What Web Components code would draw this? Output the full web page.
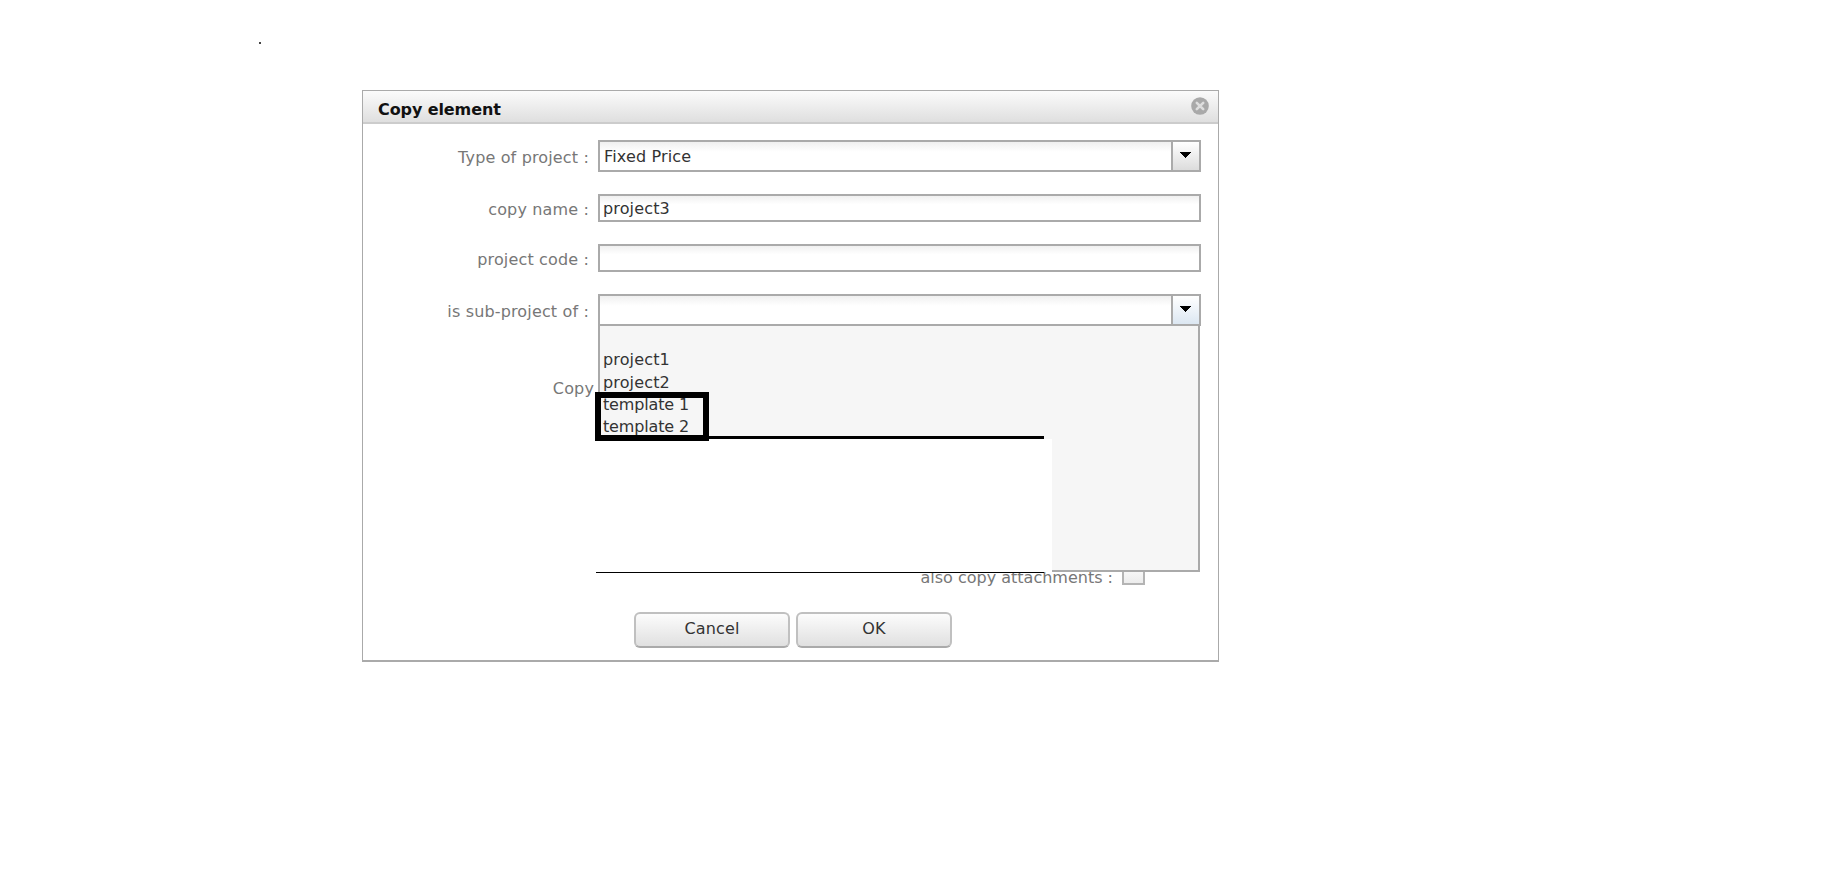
<!DOCTYPE html>
<html>
<head>
<meta charset="utf-8">
<title>Copy element</title>
<style>
  html, body { margin: 0; background: #fff; }
  body { font-family: "DejaVu Sans", Verdana, sans-serif; font-size: 16px; letter-spacing: 0.15px; color: #333; height: 878px; overflow: hidden; }
  .tight { letter-spacing: -0.15px; }
</style>
</head>
<body>
<copy-page>
  <copy-dialog heading="Copy element">
    <form-row label="Type of project :" style="--h:32px;--gap:22px">
      <combo-field value="Fixed Price"></combo-field>
    </form-row>
    <form-row label="copy name :" style="--h:28px;--gap:22px">
      <text-field value="project3"></text-field>
    </form-row>
    <form-row label="project code :" style="--h:28px;--gap:22px">
      <text-field></text-field>
    </form-row>
    <form-row label="is sub-project of :" style="--h:32px;--gap:50px">
      <combo-field open>
        <span>&nbsp;</span>
        <span>project1</span>
        <span>project2</span>
        <span class="tight">template 1</span>
        <span class="tight">template 2</span>
      </combo-field>
    </form-row>
    <form-row label="Copy" style="--h:22px;--gap:168px;--label-w:231px"></form-row>
    <option-row label="also copy attachments :"></option-row>
    <button-bar slot="footer">
      <push-button>Cancel</push-button>
      <push-button>OK</push-button>
    </button-bar>
  </copy-dialog>
</copy-page>

<script>
class CopyPage extends HTMLElement {
  constructor() {
    super();
    this.attachShadow({ mode: 'open' });
    this.shadowRoot.innerHTML = `
    <style>
      :host { display: block; padding: 42px 0 0 259px; }
      .dot { display: block; width: 2px; height: 2px; background: #444; }
      .wrap { margin-top: 46px; margin-left: 103px; }
    </style>
    <span class="dot"></span>
    <div class="wrap"><slot></slot></div>
    `;
  }
}
customElements.define('copy-page', CopyPage);

class CopyDialog extends HTMLElement {
  constructor() {
    super();
    this.attachShadow({ mode: 'open' });
    this.shadowRoot.innerHTML = `
    <style>
      :host {
        display: block;
        box-sizing: border-box;
        width: 857px;
        height: 572px;
        border: 1px solid #aaa;
        border-bottom: 2px solid #aaa;
        background: #fff;
        position: relative;
      }
      header {
        box-sizing: border-box;
        height: 33px;
        display: flex;
        align-items: center;
        justify-content: space-between;
        padding: 0 9px 2px 15px;
        background: linear-gradient(#fbfbfb, #dfdfdf);
        border-bottom: 2px solid #ccc;
      }
      h1 { margin: 0; font-size: 16px; letter-spacing: -0.1px; font-weight: bold; color: #111; position: relative; top: 4px; }
      svg { display: block; margin-top: 1px; }
      main { padding: 16px 0 0 0; }
      footer { margin-top: 24px; }
    </style>
    <header>
      <h1></h1>
      <svg width="18" height="18" viewBox="0 0 18 18">
        <circle cx="9" cy="9" r="8.8" fill="#a9a9a9"/>
        <path d="M5.8 5.8l6.4 6.4M12.2 5.8l-6.4 6.4" stroke="#dedede" stroke-width="2.6" stroke-linecap="round"/>
      </svg>
    </header>
    <main><slot></slot></main>
    <footer><slot name="footer"></slot></footer>
    `;
    this.shadowRoot.querySelector('h1').textContent = this.getAttribute('heading');
  }
}
customElements.define('copy-dialog', CopyDialog);

class FormRow extends HTMLElement {
  constructor() {
    super();
    this.attachShadow({ mode: 'open' });
    this.shadowRoot.innerHTML = `
    <style>
      :host {
        display: grid;
        grid-template-columns: var(--label-w, 226px) 603px;
        column-gap: 9px;
        height: var(--h, 28px);
        margin-bottom: var(--gap, 22px);
        align-items: center;
      }
      label { text-align: right; color: #777; white-space: nowrap; position: relative; top: 1px; }
    </style>
    <label></label>
    <div><slot></slot></div>
    `;
    this.shadowRoot.querySelector('label').textContent = this.getAttribute('label');
  }
}
customElements.define('form-row', FormRow);

class TextField extends HTMLElement {
  constructor() {
    super();
    this.attachShadow({ mode: 'open' });
    this.shadowRoot.innerHTML = `
    <style>
      :host {
        display: block;
        box-sizing: border-box;
        height: 28px;
        border: 2px solid #aaa;
        background: linear-gradient(#f0f0f0, #fff 35%);
        line-height: 26px;
        padding-left: 3px;
      }
    </style>
    <span></span>
    `;
    this.shadowRoot.querySelector('span').textContent = this.getAttribute('value') || '';
  }
}
customElements.define('text-field', TextField);

class ComboField extends HTMLElement {
  constructor() {
    super();
    this.attachShadow({ mode: 'open' });
    const open = this.hasAttribute('open');
    this.shadowRoot.innerHTML = `
    <style>
      :host { display: block; position: relative; height: 32px; }
      .box {
        box-sizing: border-box;
        height: 32px;
        border: 2px solid #aaa;
        display: flex;
        background: linear-gradient(#f0f0f0, #fff 35%);
      }
      .value { flex: 1; line-height: 29px; padding-left: 4px; }
      .arrow {
        width: 28px;
        border-left: 2px solid #aaa;
        background: linear-gradient(#fff, ${open ? '#dce7f2' : '#dcdcdc'});
        display: flex;
        align-items: flex-start;
        justify-content: center;
        padding: 10px 2px 0 0;
        box-sizing: border-box;
      }
      .list {
        position: absolute;
        left: 0;
        top: 32px;
        box-sizing: border-box;
        width: 602px;
        height: 246px;
        padding: 1px 0 0 3px;
        background: #f6f6f6;
        border: 2px solid #aaa;
        border-top: 0;
        display: ${open ? 'block' : 'none'};
      }
      ::slotted(span) { display: block; line-height: 22.3px; height: 22.3px; }
      .mark {
        position: absolute;
        left: -5px;
        top: 66px;
        width: 114px;
        height: 49px;
        box-sizing: border-box;
        border: 6px solid #000;
      }
      .rule { position: absolute; left: 109px; top: 110px; width: 335px; height: 3px; background: #000; }
      .blank { position: absolute; left: -5px; top: 113px; width: 457px; height: 133px; background: #fff; }
      .baseline { position: absolute; left: -4px; top: 246px; width: 448px; height: 1px; background: #000; }
    </style>
    <div class="box">
      <div class="value"></div>
      <div class="arrow">
        <svg width="11" height="6" viewBox="0 0 11 6"><path d="M0 0h11v1h-1v1H9v1H8v1H7v1H6v1H5V5H4V4H3V3H2V2H1V1H0z" fill="#000"/></svg>
      </div>
    </div>
    <div class="list">
      <slot></slot>
      <div class="blank"></div>
      <div class="mark"></div>
      <div class="rule"></div>
      <div class="baseline"></div>
    </div>
    `;
    this.shadowRoot.querySelector('.value').textContent = this.getAttribute('value') || '';
  }
}
customElements.define('combo-field', ComboField);

class OptionRow extends HTMLElement {
  constructor() {
    super();
    this.attachShadow({ mode: 'open' });
    this.shadowRoot.innerHTML = `
    <style>
      :host {
        display: flex;
        justify-content: flex-end;
        align-items: center;
        gap: 9px;
        height: 22px;
        padding-right: 73px;
        color: #777;
        letter-spacing: 0;
      }
      i {
        display: block;
        box-sizing: border-box;
        width: 23px;
        height: 16px;
        border: 2px solid #b4b4b4;
        background: linear-gradient(#f8f8f8, #ececec);
      }
    </style>
    <span></span><i></i>
    `;
    this.shadowRoot.querySelector('span').textContent = this.getAttribute('label');
  }
}
customElements.define('option-row', OptionRow);

class ButtonBar extends HTMLElement {
  constructor() {
    super();
    this.attachShadow({ mode: 'open' });
    this.shadowRoot.innerHTML = `
    <style>
      :host { display: flex; gap: 6px; padding-left: 271px; }
    </style>
    <slot></slot>
    `;
  }
}
customElements.define('button-bar', ButtonBar);

class PushButton extends HTMLElement {
  constructor() {
    super();
    this.attachShadow({ mode: 'open' });
    this.shadowRoot.innerHTML = `
    <style>
      :host {
        display: block;
        box-sizing: border-box;
        width: 156px;
        height: 36px;
        border: 2px solid #c0c0c0;
        border-bottom-color: #aaa;
        border-radius: 6px;
        background: linear-gradient(#fcfcfc, #e0e0e0);
        text-align: center;
        line-height: 30px;
      }
    </style>
    <slot></slot>
    `;
  }
}
customElements.define('push-button', PushButton);
</script>
</body>
</html>
